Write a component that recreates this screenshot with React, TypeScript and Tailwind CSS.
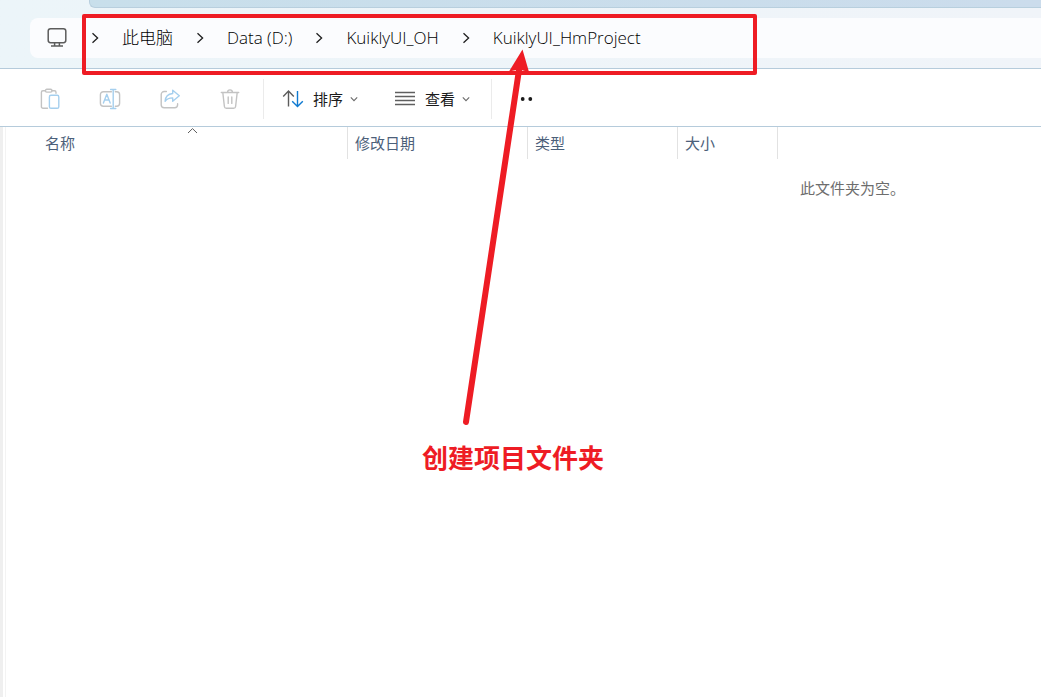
import type { ReactNode } from 'react';

interface ToolButtonProps {
  label: string;
  children: ReactNode;
}

const crumbs = ['此电脑', 'Data (D:)', 'KuiklyUI_OH', 'KuiklyUI_HmProject'];

function ChevronRight() {
  return (
    <svg className="w-3 h-3 shrink-0" viewBox="0 0 12 12" fill="none" stroke="#1f1f1f" strokeWidth="1.3">
      <path d="M3.5 1.2L8.6 6l-5.1 4.8" />
    </svg>
  );
}

function ChevronDown() {
  return (
    <svg className="w-2 h-2" viewBox="0 0 8 8" fill="none" stroke="#6b6b6b" strokeWidth="1.1">
      <path d="M.8 2.4L4 5.6l3.2-3.2" />
    </svg>
  );
}

function ToolButton({ label, children }: ToolButtonProps) {
  return (
    <button type="button" disabled aria-label={label} className="flex w-15 h-10 items-center justify-center">
      <svg className="w-6 h-6" viewBox="0 0 24 24" fill="none" stroke="#c3c3c3" strokeWidth="1.4" strokeLinecap="round" strokeLinejoin="round">
        {children}
      </svg>
    </button>
  );
}

function AddressBar() {
  return (
    <header className="border-b border-[#b5cbdb] bg-linear-to-r from-[#ecf5f9] to-[#f0f4f9]">
      <div className="ml-[89px] h-2 rounded-bl-md border-b border-l border-[#b8cfde] bg-linear-to-r from-[#c8dfeb] to-[#cbdcec]" />
      <div className="pt-[10px] pb-[10px] pl-[30px]">
        <nav aria-label="地址" className="flex h-10 items-center rounded-l-lg bg-[#fbfcfe] pl-4">
          <svg className="w-[22px] h-[22px] mr-[21px]" viewBox="0 0 22 22" fill="none" stroke="#5c5c5c" strokeWidth="1.5">
            <rect x="2.2" y="1.7" width="17.6" height="14" rx="2.4" />
            <path d="M8.6 16v2.6M13.4 16v2.6M5 19h12" />
          </svg>
          <ol className="flex items-center text-[17px] leading-6 font-light text-black">
            {crumbs.map((crumb) => (
              <li key={crumb} className="flex items-center">
                <ChevronRight />
                <a href="#" className="mx-[21px] whitespace-nowrap">
                  {crumb}
                </a>
              </li>
            ))}
          </ol>
        </nav>
      </div>
    </header>
  );
}

function Toolbar() {
  return (
    <div className="flex h-[58px] items-center border-b border-[#b5cbdb] pt-[2px] pl-5">
      <ToolButton label="粘贴">
        <path d="M9.5 21.3H5a1.6 1.6 0 0 1-1.6-1.6V5.3A1.6 1.6 0 0 1 5 3.7h2.4M14 3.7h2.4A1.6 1.6 0 0 1 18 5.3v.9" />
        <rect x="7.4" y="2.3" width="6.6" height="2.8" rx="1.4" />
        <rect x="11.4" y="8.3" width="9.4" height="13" rx="1.6" stroke="#a5cfee" />
      </ToolButton>
      <ToolButton label="重命名">
        <path d="M13.4 4.7H5.4a3 3 0 0 0-3 3v8.6a3 3 0 0 0 3 3h8M17.3 4.7h1.3a3 3 0 0 1 3 3v8.6a3 3 0 0 1-3 3h-1.3" />
        <path stroke="#a5cfee" d="M5.4 16l3.4-8.8L12.2 16M6.6 13h4.4M12.6 2.5h5.2M12.6 21.5h5.2M15.2 2.5v19" />
      </ToolButton>
      <ToolButton label="共享">
        <path d="M8.4 4.5H6.2a3 3 0 0 0-3 3v10.2a3 3 0 0 0 3 3h10.4a3 3 0 0 0 3-3v-1" />
        <path stroke="#a5cfee" d="M14.7 3.2l6.6 5.6-6.6 5.4v-3.3c-3.6-.1-5.8 1-7.6 3.4.3-4.6 3-7.4 7.6-7.8z" />
      </ToolButton>
      <ToolButton label="删除">
        <path d="M3.3 5.5h17.4M4.8 5.5l1.6 14a2 2 0 0 0 2 1.8h7.2a2 2 0 0 0 2-1.8l1.6-14M9.6 5.3a2.4 2.4 0 0 1 4.8 0M10.2 10v6.4M13.8 10v6.4" />
      </ToolButton>
      <div className="ml-[3px] h-10 w-px bg-[#ebebeb]" />
      <button type="button" className="ml-[18px] flex items-center text-[15px] leading-5 text-[#1b1b1b]">
        <svg className="w-[22px] h-[22px] mr-[9px]" viewBox="0 0 22 22" fill="none" strokeWidth="1.4">
          <path stroke="#5c5c5c" d="M6.5 18.5V3M1.2 8.4L6.5 3l5.3 5.4" />
          <path stroke="#0f7ad1" d="M15.5 3v15.5M10.2 13.2l5.3 5.3 5.3-5.3" />
        </svg>
        <span className="mr-[7px]">排序</span>
        <ChevronDown />
      </button>
      <button type="button" className="ml-9 flex items-center text-[15px] leading-5 text-[#1b1b1b]">
        <svg className="w-[22px] h-[22px] mr-[9px]" viewBox="0 0 22 22" fill="none" stroke="#5f5f5f" strokeWidth="1.3">
          <path d="M1 4.5h20M1 8.5h20M1 12.5h20M1 16.5h20" />
        </svg>
        <span className="mr-[7px]">查看</span>
        <ChevronDown />
      </button>
      <div className="ml-[21px] h-10 w-px bg-[#ebebeb]" />
      <button type="button" aria-label="查看更多" className="ml-5">
        <svg className="w-[22px] h-[22px]" viewBox="0 0 22 22" fill="#1b1b1b">
          <circle cx="3" cy="11" r="1.9" />
          <circle cx="10.7" cy="11" r="1.9" />
          <circle cx="18.3" cy="11" r="1.9" />
        </svg>
      </button>
    </div>
  );
}

function FileList() {
  const cell = 'h-8 border-r border-[#e2e2e2] pl-[7px] text-left font-normal';

  return (
    <main className="flex flex-1">
      <div className="w-[3px] bg-[#efefef]" />
      <div className="ml-[2px] w-px bg-[#f3f3f3]" />
      <div className="flex-1 text-[15px] leading-5">
        <table className="table-fixed w-[772px] border-separate border-spacing-0 text-[#4c607a]">
          <thead>
            <tr>
              <th className="relative h-8 w-[342px] border-r border-[#e2e2e2] pl-[39px] text-left font-normal">
                名称
                <svg className="absolute top-0 left-[181px] w-[11px] h-2" viewBox="0 0 11 8" fill="none" stroke="#5c5c5c" strokeWidth="1">
                  <path d="M1 6l4.5-4.4L10 6" />
                </svg>
              </th>
              <th className={`${cell} w-[180px]`}>修改日期</th>
              <th className={`${cell} w-[150px]`}>类型</th>
              <th className={`${cell} w-[100px]`}>大小</th>
            </tr>
          </thead>
        </table>
        <p className="mt-[19px] pl-[794px] whitespace-nowrap text-[#6d6d6d]">此文件夹为空。</p>
      </div>
    </main>
  );
}

/* Red markup drawn over the window */
function Annotations() {
  return (
    <div className="pointer-events-none absolute inset-0">
      <div className="absolute top-[14px] left-[82px] h-[61px] w-[675px] rounded-xs border-4 border-[#ee1c24]" />
      <svg className="absolute top-12 left-[456px] w-20 h-[380px]" viewBox="456 48 80 380">
        <path d="M466 422L519 70" stroke="#ee1c24" strokeWidth="6" strokeLinecap="round" />
        <path d="M522.5 49.5L509 71.5l10-2 10 2.5z" fill="#ee1c24" />
      </svg>
      <p className="absolute top-[440px] left-[422px] whitespace-nowrap text-[26px] leading-9 font-bold text-[#ee1c24]">
        创建项目文件夹
      </p>
    </div>
  );
}

export default function App() {
  return (
    <div className="relative flex min-h-screen flex-col overflow-hidden bg-white font-['Open_Sans','Noto_Sans_CJK_SC',sans-serif]">
      <AddressBar />
      <Toolbar />
      <FileList />
      <Annotations />
    </div>
  );
}
